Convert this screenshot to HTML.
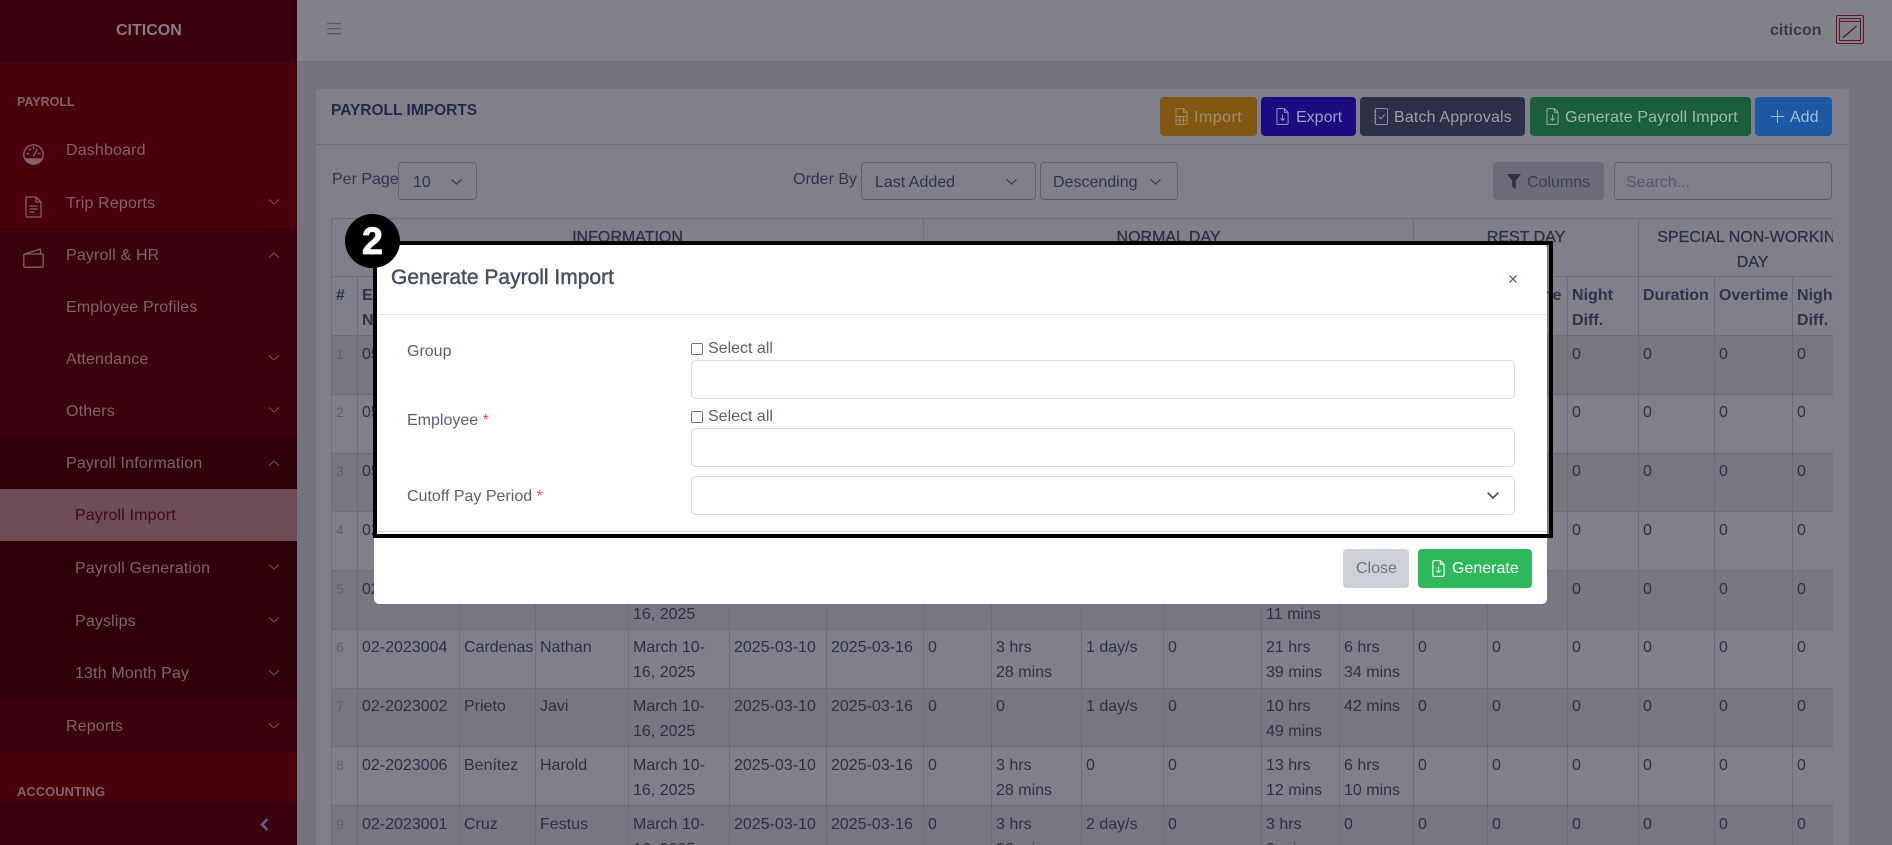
<!DOCTYPE html>
<html lang="en">
<head>
<meta charset="utf-8">
<title>Payroll Imports</title>
<style>
*{box-sizing:border-box}
html,body{margin:0;padding:0;width:1892px;height:845px;overflow:hidden;background:#73747e;font-family:"Liberation Sans",Arial,sans-serif;font-size:16px}
body{position:relative}
.a{position:absolute}
.t{position:absolute;white-space:nowrap;line-height:24px;height:24px;margin-top:1px}
svg{position:absolute;display:block;overflow:visible}
.nav{color:#80626c;letter-spacing:.15px}
.band{position:absolute;left:0;width:297px}
.btn{position:absolute;top:97px;height:39px;border-radius:4px}
.sel{position:absolute;top:162px;height:38px;border:1px solid #5f616e;border-radius:4px}
.dk{color:#30354a}
#tw{position:absolute;left:331px;top:218px;width:1502px;height:627px;overflow:hidden}
table{border-collapse:collapse;table-layout:fixed;width:1535px;color:#2d3145;line-height:25px}
td,th{border:1px solid #6c6d79;padding:5.5px 0 0 4px;vertical-align:top;white-space:nowrap;overflow:hidden;font-weight:400;text-align:left}
tr.h1 th{text-align:center;height:58px;padding-left:0;-webkit-text-stroke:.3px #2d3145}
tr.h2 th{height:59px;font-weight:700;color:#2f344a}
tr.r td{height:58.75px}
tr.o td{background:#767781}
tr.e td{background:#7f808a}
td.n{color:#5c5f6e;font-size:14px;padding-left:4px}
.m{color:#566070}
</style>
</head>
<body>

<!-- sidebar -->
<div class="a" style="left:0;top:0;width:297px;height:845px;background:#4a0009"></div>
<div class="band" style="top:0;height:62px;background:#3a000b"></div>
<div class="band" style="top:228px;height:209px;background:#3a000b"></div>
<div class="band" style="top:437px;height:52px;background:#30000a"></div>
<div class="band" style="top:489px;height:52px;background:#6e4d58"></div>
<div class="band" style="top:541px;height:158px;background:#30000a"></div>
<div class="band" style="top:699px;height:53px;background:#3a000b"></div>
<div class="band" style="top:801px;height:44px;background:#3a000b"></div>

<div class="t" style="left:116px;top:18px;font-weight:700;color:#877987">CITICON</div>
<div class="t" style="left:17px;top:89px;font-weight:700;font-size:12.5px;color:#80626c">PAYROLL</div>
<div class="t" style="left:17px;top:779px;font-weight:700;font-size:13px;color:#80626c">ACCOUNTING</div>

<div class="t nav" style="left:66px;top:138px">Dashboard</div>
<div class="t nav" style="left:66px;top:191px">Trip Reports</div>
<div class="t nav" style="left:66px;top:243px">Payroll &amp; HR</div>
<div class="t nav" style="left:66px;top:295px">Employee Profiles</div>
<div class="t nav" style="left:66px;top:347px">Attendance</div>
<div class="t nav" style="left:66px;top:399px">Others</div>
<div class="t nav" style="left:66px;top:451px">Payroll Information</div>
<div class="t" style="left:75px;top:503px;color:#3c0a18;letter-spacing:.15px">Payroll Import</div>
<div class="t nav" style="left:75px;top:556px">Payroll Generation</div>
<div class="t nav" style="left:75px;top:609px">Payslips</div>
<div class="t nav" style="left:75px;top:661px">13th Month Pay</div>
<div class="t nav" style="left:66px;top:714px">Reports</div>

<!-- sidebar icons -->
<svg style="left:23px;top:144px" width="21" height="21" viewBox="0 0 21 21" fill="none" stroke="#80626c" stroke-width="1.4">
<circle cx="10.5" cy="10.5" r="9.7"/>
<path d="M2.2 15h16.600a9.700 9.700 0 0 1-16.600 0z" fill="#80626c"/>
<path d="M10.500 12l3.500-6M4 9.500h1.600M6.500 5l1 1.200M10.500 3.200v1.600M15.500 9.500h1.600" stroke-linecap="round"/></svg>
<svg style="left:25px;top:196px" width="17" height="22" viewBox="0 0 17 22" fill="none" stroke="#80626c" stroke-width="1.3" stroke-linejoin="round">
<path d="M1 2a1 1 0 0 1 1-1h9l5 5v14a1 1 0 0 1-1 1H2a1 1 0 0 1-1-1z"/><path d="M11 1v5h5M4.500 10h8M4.500 13h8M4.500 16h5"/></svg>
<svg style="left:23px;top:248px" width="21" height="20" viewBox="0 0 21 20" fill="none" stroke="#80626c" stroke-width="1.3" stroke-linejoin="round">
<rect x=".8" y="6" width="19.4" height="13.2" rx="1.2"/><path d="M1.500 6L17.500 1v5"/></svg>

<!-- sidebar chevrons -->
<svg style="left:269px;top:199px" width="10" height="6" fill="none" stroke="#775761" stroke-width="1"><path d="M0 .5l5 4.500 5-4.500"/></svg>
<svg style="left:269px;top:252px" width="10" height="6" fill="none" stroke="#775761" stroke-width="1"><path d="M0 5.500l5-4.500 5 4.500"/></svg>
<svg style="left:269px;top:355px" width="10" height="6" fill="none" stroke="#775761" stroke-width="1"><path d="M0 .5l5 4.500 5-4.500"/></svg>
<svg style="left:269px;top:407px" width="10" height="6" fill="none" stroke="#775761" stroke-width="1"><path d="M0 .5l5 4.500 5-4.500"/></svg>
<svg style="left:269px;top:460px" width="10" height="6" fill="none" stroke="#775761" stroke-width="1"><path d="M0 5.500l5-4.500 5 4.500"/></svg>
<svg style="left:269px;top:564px" width="10" height="6" fill="none" stroke="#775761" stroke-width="1"><path d="M0 .5l5 4.500 5-4.500"/></svg>
<svg style="left:269px;top:617px" width="10" height="6" fill="none" stroke="#775761" stroke-width="1"><path d="M0 .5l5 4.500 5-4.500"/></svg>
<svg style="left:269px;top:670px" width="10" height="6" fill="none" stroke="#775761" stroke-width="1"><path d="M0 .5l5 4.500 5-4.500"/></svg>
<svg style="left:269px;top:723px" width="10" height="6" fill="none" stroke="#775761" stroke-width="1"><path d="M0 .5l5 4.500 5-4.500"/></svg>
<svg style="left:260px;top:818px" width="9" height="13" fill="none" stroke="#4d6584" stroke-width="2.6"><path d="M7.500 1L2 6.500 7.500 12"/></svg>

<!-- topbar -->
<div class="a" style="left:297px;top:0;width:1595px;height:62px;background:#808189;border-bottom:1px solid #6f7079"></div>
<svg style="left:327px;top:23px" width="14" height="12" fill="none" stroke="#52566a" stroke-width="1.1"><path d="M0 .7h14M0 5.700h14M0 10.700h14"/></svg>
<div class="t" style="left:1770px;top:18px;font-weight:700;color:#363b50">citicon</div>
<svg style="left:1836px;top:15px" width="28" height="29" viewBox="0 0 28 29" fill="none" stroke="#661226" stroke-width="1">
<rect x=".5" y=".5" width="27" height="28" rx="1.500"/><path d="M3.500 3.500h21v22h-21zM3.500 6.500h21" /><path d="M7 22.500L20.500 11" stroke-width="1.300"/></svg>

<!-- card -->
<div class="a" style="left:315px;top:88px;width:1535px;height:757px;background:#7f808a;border:1px solid #74757f;border-bottom:0;border-radius:4px 4px 0 0"></div>
<div class="a" style="left:316px;top:144px;width:1533px;height:1px;background:#6e6f7a"></div>
<div class="t" style="left:331px;top:98px;font-weight:700;font-size:15.5px;color:#222a48">PAYROLL IMPORTS</div>

<!-- action buttons -->
<div class="btn" style="left:1160px;width:97px;background:#805812"></div>
<svg style="left:1175px;top:108px" width="13" height="17" viewBox="0 0 14 18" fill="none" stroke="#a08c70" stroke-width="1">
<path d="M1 1.500a1 1 0 0 1 1-1h7l4 4v12a1 1 0 0 1-1 1H2a1 1 0 0 1-1-1zM9 .5v4h4M1 9h12M1 13h12M5 9v8.500M9 9v8.500"/></svg>
<div class="t" style="left:1194px;top:105px;color:#a08c70;letter-spacing:.5px">Import</div>

<div class="btn" style="left:1261px;width:95px;background:#1a0c80"></div>
<svg style="left:1276px;top:108px" width="13" height="17" viewBox="0 0 14 18" fill="none" stroke="#a09ec0" stroke-width="1">
<path d="M1 1.500a1 1 0 0 1 1-1h7l4 4v12a1 1 0 0 1-1 1H2a1 1 0 0 1-1-1zM9 .5v4h4M7 7v6M4.800 11L7 13.300 9.200 11"/></svg>
<div class="t" style="left:1296px;top:105px;color:#a09ec0">Export</div>

<div class="btn" style="left:1360px;width:165px;background:#2b3047"></div>
<svg style="left:1373px;top:108px" width="15" height="17" viewBox="0 0 16 18" fill="none" stroke="#8f93a3" stroke-width="1">
<rect x="2.500" y=".5" width="13" height="17" rx="1.500"/><path d="M1 4h2.500M1 7.500h2.500M1 11h2.500M1 14.500h2.500M6 9l2.500 2.500L12.500 6.500"/></svg>
<div class="t" style="left:1394px;top:105px;color:#989cab;letter-spacing:.15px">Batch Approvals</div>

<div class="btn" style="left:1530px;width:221px;background:#19603a"></div>
<svg style="left:1546px;top:108px" width="13" height="17" viewBox="0 0 14 18" fill="none" stroke="#9ab4a5" stroke-width="1">
<path d="M1 1.500a1 1 0 0 1 1-1h7l4 4v12a1 1 0 0 1-1 1H2a1 1 0 0 1-1-1zM9 .5v4h4M7 7v6M4.800 11L7 13.300 9.200 11"/></svg>
<div class="t" style="left:1565px;top:105px;color:#9fb9aa;letter-spacing:.13px">Generate Payroll Import</div>

<div class="btn" style="left:1755px;width:77px;background:#1b5aa2"></div>
<svg style="left:1771px;top:110px" width="13" height="13" fill="none" stroke="#a0bbd8" stroke-width="1"><path d="M6.500 0v13M0 6.500h13"/></svg>
<div class="t" style="left:1790px;top:105px;color:#a0bbd8">Add</div>

<!-- filters -->
<div class="t dk" style="left:332px;top:167px">Per Page</div>
<div class="sel" style="left:398px;width:79px"></div>
<div class="t dk" style="left:413px;top:170px">10</div>
<svg style="left:451px;top:179px" width="11" height="6" fill="none" stroke="#3a3f52" stroke-width="1.300"><path d="M.5 .5l5 4.500 5-4.500"/></svg>

<div class="t dk" style="left:793px;top:167px">Order By</div>
<div class="sel" style="left:861px;width:175px"></div>
<div class="t dk" style="left:875px;top:170px">Last Added</div>
<svg style="left:1006px;top:179px" width="11" height="6" fill="none" stroke="#3a3f52" stroke-width="1.300"><path d="M.5 .5l5 4.500 5-4.500"/></svg>

<div class="sel" style="left:1040px;width:138px"></div>
<div class="t dk" style="left:1053px;top:170px">Descending</div>
<svg style="left:1150px;top:179px" width="11" height="6" fill="none" stroke="#3a3f52" stroke-width="1.300"><path d="M.5 .5l5 4.500 5-4.500"/></svg>

<div class="a" style="left:1493px;top:162px;width:111px;height:38px;background:#6b6c78;border-radius:4px"></div>
<svg style="left:1507px;top:174px" width="14" height="15"><path d="M0 0h14L8.800 6.500V15L5.200 12.800V6.500z" fill="#2b3047"/></svg>
<div class="t" style="left:1527px;top:170px;color:#3b4052">Columns</div>

<div class="sel" style="left:1614px;width:218px"></div>
<div class="t" style="left:1626px;top:170px;color:#54586a">Search...</div>

<!-- table -->
<div id="tw">
<table>
<colgroup>
<col style="width:26px"><col style="width:102px"><col style="width:76px"><col style="width:93px"><col style="width:101px"><col style="width:97px"><col style="width:97px"><col style="width:68px"><col style="width:90px"><col style="width:82px"><col style="width:98px"><col style="width:78px"><col style="width:74px"><col style="width:74px"><col style="width:80px"><col style="width:71px"><col style="width:76px"><col style="width:78px"><col style="width:74px">
</colgroup>
<tr class="h1"><th colspan="7">INFORMATION</th><th colspan="6">NORMAL DAY</th><th colspan="3">REST DAY</th><th colspan="3">SPECIAL NON-WORKING<br>DAY</th></tr>
<tr class="h2"><th>#</th><th>Employee<br>No.</th><th>Last<br>Name</th><th>First<br>Name</th><th>Period</th><th>From</th><th>To</th><th>Days</th><th>Tardy</th><th>Absent</th><th>Leave</th><th>Duration</th><th>Night<br>Diff.</th><th>Duration</th><th>Overtime</th><th>Night<br>Diff.</th><th>Duration</th><th>Overtime</th><th>Night<br>Diff.</th></tr>
<tr class="r o"><td class="n">1</td><td>05-2023001</td><td></td><td></td><td></td><td></td><td></td><td></td><td></td><td></td><td></td><td></td><td></td><td>0</td><td>0</td><td>0</td><td>0</td><td>0</td><td>0</td></tr>
<tr class="r e"><td class="n">2</td><td>05-2023002</td><td></td><td></td><td></td><td></td><td></td><td></td><td></td><td></td><td></td><td></td><td></td><td>0</td><td>0</td><td>0</td><td>0</td><td>0</td><td>0</td></tr>
<tr class="r o"><td class="n">3</td><td>05-2023003</td><td></td><td></td><td></td><td></td><td></td><td></td><td></td><td></td><td></td><td></td><td></td><td>0</td><td>0</td><td>0</td><td>0</td><td>0</td><td>0</td></tr>
<tr class="r e"><td class="n">4</td><td>02-2023003</td><td></td><td></td><td></td><td></td><td></td><td></td><td></td><td></td><td></td><td></td><td></td><td>0</td><td>0</td><td>0</td><td>0</td><td>0</td><td>0</td></tr>
<tr class="r o"><td class="n">5</td><td>02-2023005</td><td></td><td></td><td>March 10-<br>16, 2025</td><td></td><td></td><td></td><td></td><td></td><td></td><td>3 hrs<br>11 mins</td><td></td><td>0</td><td>0</td><td>0</td><td>0</td><td>0</td><td>0</td></tr>
<tr class="r e"><td class="n">6</td><td>02-2023004</td><td>Cardenas</td><td>Nathan</td><td>March 10-<br>16, 2025</td><td>2025-03-10</td><td>2025-03-16</td><td>0</td><td>3 hrs<br>28 mins</td><td>1 day/s</td><td>0</td><td>21 hrs<br>39 mins</td><td>6 hrs<br>34 mins</td><td>0</td><td>0</td><td>0</td><td>0</td><td>0</td><td>0</td></tr>
<tr class="r o"><td class="n">7</td><td>02-2023002</td><td>Prieto</td><td>Javi</td><td>March 10-<br>16, 2025</td><td>2025-03-10</td><td>2025-03-16</td><td>0</td><td>0</td><td>1 day/s</td><td>0</td><td>10 hrs<br>49 mins</td><td>42 mins</td><td>0</td><td>0</td><td>0</td><td>0</td><td>0</td><td>0</td></tr>
<tr class="r e"><td class="n">8</td><td>02-2023006</td><td>Benítez</td><td>Harold</td><td>March 10-<br>16, 2025</td><td>2025-03-10</td><td>2025-03-16</td><td>0</td><td>3 hrs<br>28 mins</td><td>0</td><td>0</td><td>13 hrs<br>12 mins</td><td>6 hrs<br>10 mins</td><td>0</td><td>0</td><td>0</td><td>0</td><td>0</td><td>0</td></tr>
<tr class="r o"><td class="n">9</td><td>02-2023001</td><td>Cruz</td><td>Festus</td><td>March 10-<br>16, 2025</td><td>2025-03-10</td><td>2025-03-16</td><td>0</td><td>3 hrs<br>32 mins</td><td>2 day/s</td><td>0</td><td>3 hrs<br>3 mins</td><td>0</td><td>0</td><td>0</td><td>0</td><td>0</td><td>0</td><td>0</td></tr>
</table>
</div>

<!-- modal -->
<div class="a" style="left:374px;top:243px;width:1173px;height:361px;background:#fff;border-radius:5px"></div>
<div class="a" style="left:374px;top:314px;width:1173px;height:1px;background:#e3e6ee"></div>
<div class="a" style="left:374px;top:531px;width:1173px;height:1px;background:#d9dce2"></div>
<div class="t" style="left:391px;top:265px;font-size:21px;color:#465062;-webkit-text-stroke:.45px #465062">Generate Payroll Import</div>
<svg style="left:1509px;top:275px" width="8" height="8" fill="none" stroke="#556070" stroke-width="1.300"><path d="M.5 .5l7 7M7.500 .5l-7 7"/></svg>

<div class="t m" style="left:407px;top:339px">Group</div>
<div class="t m" style="left:407px;top:408px">Employee <span style="color:#f0485a">*</span></div>
<div class="t m" style="left:407px;top:484px">Cutoff Pay Period <span style="color:#f0485a">*</span></div>

<div class="a" style="left:691px;top:343px;width:12px;height:12px;border:1px solid #6b7280;border-radius:2px;background:#fff"></div>
<div class="t m" style="left:708px;top:336px">Select all</div>
<div class="a" style="left:691px;top:360px;width:824px;height:39px;border:1px solid #d5dbe4;border-radius:5px;background:#fff"></div>

<div class="a" style="left:691px;top:411px;width:12px;height:12px;border:1px solid #6b7280;border-radius:2px;background:#fff"></div>
<div class="t m" style="left:708px;top:404px">Select all</div>
<div class="a" style="left:691px;top:428px;width:824px;height:39px;border:1px solid #d5dbe4;border-radius:5px;background:#fff"></div>

<div class="a" style="left:691px;top:476px;width:824px;height:39px;border:1px solid #d5dbe4;border-radius:5px;background:#fff"></div>
<svg style="left:1487px;top:492px" width="12" height="7" fill="none" stroke="#3f4654" stroke-width="1.600"><path d="M.7 .7L6 6l5.300-5.300"/></svg>

<div class="a" style="left:1343px;top:549px;width:66px;height:39px;background:#cdd1da;border-radius:4px"></div>
<div class="t" style="left:1356px;top:556px;color:#6f7683">Close</div>
<div class="a" style="left:1418px;top:549px;width:114px;height:39px;background:#2eb85c;border-radius:4px"></div>
<svg style="left:1432px;top:560px" width="13" height="17" viewBox="0 0 14 18" fill="none" stroke="#fff" stroke-width="1.200">
<path d="M1 1.500a1 1 0 0 1 1-1h7l4 4v12a1 1 0 0 1-1 1H2a1 1 0 0 1-1-1zM9 .5v4h4M7 7v6M4.800 11L7 13.300 9.200 11"/></svg>
<div class="t" style="left:1452px;top:556px;color:#fff">Generate</div>

<!-- callout -->
<div class="a" style="left:373px;top:241px;width:1180px;height:297px;border:4.500px solid #000"></div>
<div class="a" style="left:345px;top:214px;width:55px;height:54px;background:#000;border-radius:50%"></div>
<div class="t" style="left:345px;top:221px;width:55px;height:40px;line-height:40px;text-align:center;color:#fff;font-weight:700;font-size:38px;-webkit-text-stroke:.8px #fff">2</div>

</body>
</html>
